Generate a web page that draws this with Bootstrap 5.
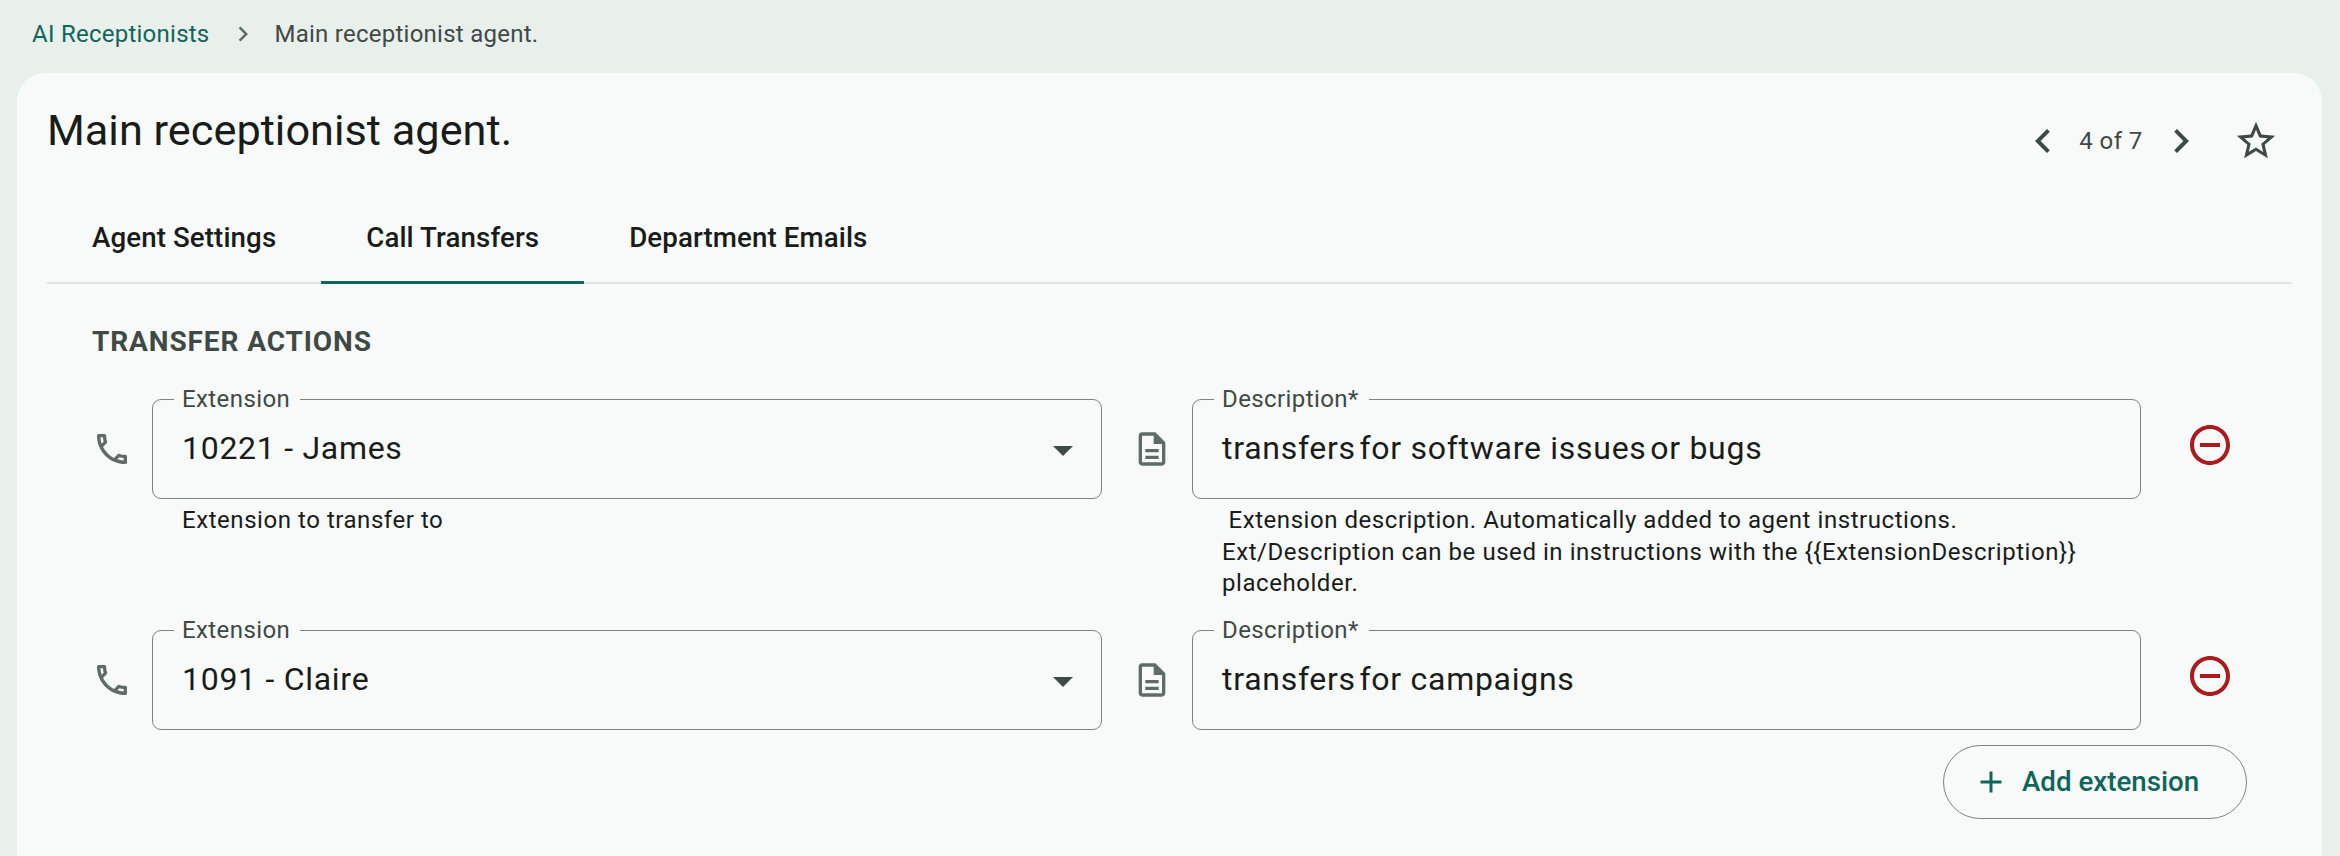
<!DOCTYPE html>
<html lang="en">
<head>
    <meta charset="UTF-8">
    <meta name="viewport" content="width=device-width, initial-scale=1.0">
    <title>Main receptionist agent.</title>
    <link href="https://cdn.jsdelivr.net/npm/bootstrap@5.3.0/dist/css/bootstrap.min.css" rel="stylesheet">
    <style>
        html, body {
            height: 100%;
        }
        body {
            background-color: #e9efeb;
            color: #191c1b;
            font-family: Roboto, sans-serif;
            overflow: hidden;
        }
        svg {
            fill: currentColor;
            display: block;
            flex: none;
        }
        .crumbs {
            height: 73px;
            padding: 0 0 6px 32px;
            font-size: 24px;
            letter-spacing: .25px;
            color: #3f4946;
        }
        .crumbs a {
            color: #0f665a;
            text-decoration: none;
        }
        .crumbs svg {
            margin: 0 17px 0 18px;
            color: #5f6b67;
        }
        .sheet {
            margin: 0 18px 0 17px;
            height: 783px;
            background-color: #f8faf9;
            border-radius: 28px 28px 0 0;
            padding: 0 30px;
        }
        .sheet-head {
            height: 135px;
        }
        .sheet-title {
            font-size: 43.3px;
            font-weight: 400;
            line-height: 52px;
            margin: 32px 0 0;
        }
        .pager {
            margin-top: 44px;
            padding-right: 13px;
            color: #3f4946;
            font-size: 24px;
            letter-spacing: .4px;
        }
        .pager-count {
            width: 90px;
            text-align: center;
            padding-right: 2px;
        }
        .star-btn {
            margin-left: 28px;
        }
        .tab-bar {
            border-bottom: 2px solid #dfe4e1;
            height: 76px;
        }
        .tab-bar .nav-link {
            color: #191c1b;
            font-size: 27.7px;
            font-weight: 500;
            padding: 0 45px;
            height: 76px;
            line-height: 59px;
            margin-bottom: -2px;
            letter-spacing: .1px;
        }
        .tab-bar .nav-link.active {
            border-bottom: 3px solid #0f665a;
        }
        .section-title {
            font-size: 28px;
            font-weight: 700;
            color: #3f4946;
            letter-spacing: .9px;
            margin: 42px 0 0 45px;
            line-height: 32px;
        }
        .ext-row {
            padding-left: 45px;
        }
        .first-row {
            margin-top: 41px;
            min-height: 231px;
        }
        .field-icon {
            width: 40px;
            height: 100px;
            color: #5f6b67;
        }
        .field-wrap {
            width: 950px;
            margin-left: 20px;
        }
        .desc-wrap {
            width: 949px;
        }
        .doc-gap {
            margin-left: 30px;
        }
        .outlined {
            position: relative;
            height: 100px;
            border: 1px solid #7a8580;
            border-radius: 9px;
            padding: 0 29px;
            font-size: 32px;
            letter-spacing: .72px;
            line-height: 96px;
        }
        .outlined-label {
            position: absolute;
            left: 21px;
            top: -14px;
            padding: 0 10px 0 8px;
            background-color: #f8faf9;
            font-size: 24px;
            line-height: 27px;
            color: #3f4946;
            letter-spacing: .4px;
        }
        .caret-icon {
            position: absolute;
            right: 14px;
            top: 26px;
            color: #3f4946;
        }
        .helper {
            font-size: 24px;
            line-height: 31.5px;
            letter-spacing: .55px;
            padding: 6px 29px 0 30px;
        }
        .tight-space {
            word-spacing: -5px;
        }
        .remove-btn {
            color: #ab1a1f;
            background: none;
            border: 0;
            padding: 0;
            margin: 22px 0 0 45px;
            height: 48px;
        }
        .add-ext {
            width: 304px;
            height: 74px;
            margin: 15px 45px 0 0;
            border: 1px solid #7a8580;
            border-radius: 37px;
            color: #0f665a;
            font-size: 27.7px;
            font-weight: 500;
            padding: 0 0 0 29px;
            gap: 13px;
        }
    </style>
</head>
<body>

    <!-- Breadcrumb -->
    <div class="crumbs d-flex align-items-center">
        <a href="#">AI Receptionists</a>
        <svg width="30" height="30" viewBox="0 0 24 24"><path d="M10 6 8.59 7.41 13.17 12l-4.58 4.59L10 18l6-6z"/></svg>
        <span>Main receptionist agent.</span>
    </div>

    <div class="sheet">
        <div class="sheet-head d-flex justify-content-between align-items-start">
            <h1 class="sheet-title">Main receptionist agent.</h1>
            <div class="pager d-flex align-items-center">
                <svg width="48" height="48" viewBox="0 0 24 24"><path d="M15.41 7.41 14 6l-6 6 6 6 1.41-1.41L10.83 12z"/></svg>
                <span class="pager-count">4 of 7</span>
                <svg width="48" height="48" viewBox="0 0 24 24"><path d="M10 6 8.59 7.41 13.17 12l-4.58 4.59L10 18l6-6z"/></svg>
                <svg class="star-btn" width="46" height="46" viewBox="0 0 24 24"><path d="M22 9.24l-7.19-.62L12 2 9.19 8.63 2 9.24l5.46 4.73L5.82 21 12 17.27 18.18 21l-1.63-7.03L22 9.24zM12 15.4l-3.76 2.27 1-4.28-3.32-2.88 4.38-.38L12 6.1l1.71 4.04 4.38.38-3.32 2.88 1 4.28L12 15.4z"/></svg>
            </div>
        </div>

        <ul class="nav tab-bar">
            <li class="nav-item"><a class="nav-link" href="#">Agent Settings</a></li>
            <li class="nav-item"><a class="nav-link active" href="#">Call Transfers</a></li>
            <li class="nav-item"><a class="nav-link" href="#">Department Emails</a></li>
        </ul>

        <h2 class="section-title">TRANSFER ACTIONS</h2>

        <div id="extensions"></div>

        <div class="d-flex justify-content-end">
            <button class="btn add-ext d-flex align-items-center" type="button">
                <svg width="36" height="36" viewBox="0 0 24 24"><path d="M19 13h-6v6h-2v-6H5v-2h6V5h2v6h6v2z"/></svg>
                Add extension
            </button>
        </div>
    </div>

    <script>
        const extensions = [
            {
                name: "10221 - James",
                description: '<span class="tight-space">transfers for</span> software <span class="tight-space">issues or</span> bugs',
                extHelp: "Extension to transfer to",
                descHelp: "&nbsp;Extension description. Automatically added to agent instructions. Ext/Description can be used in instructions with the {{ExtensionDescription}} placeholder."
            },
            { name: "1091 - Claire", description: '<span class="tight-space">transfers for</span> campaigns' }
        ];

        const phoneIcon = '<svg width="40" height="40" viewBox="0 0 24 24"><path d="M6.54 5c.06.89.21 1.76.45 2.59l-1.2 1.2c-.41-1.2-.67-2.47-.76-3.79h1.51m9.86 12.02c.85.24 1.72.39 2.6.45v1.49c-1.32-.09-2.59-.35-3.8-.75l1.2-1.19M7.5 3H4c-.55 0-1 .45-1 1 0 9.39 7.61 17 17 17 .55 0 1-.45 1-1v-3.49c0-.55-.45-1-1-1-1.24 0-2.45-.2-3.57-.57-.1-.04-.21-.05-.31-.05-.26 0-.51.1-.71.29l-2.2 2.2c-2.83-1.45-5.15-3.76-6.59-6.59l2.2-2.2c.28-.28.36-.67.25-1.02C8.7 6.45 8.5 5.25 8.5 4c0-.55-.45-1-1-1z"/></svg>';
        const docIcon = '<svg width="40" height="40" viewBox="0 0 24 24"><path d="M8 16h8v2H8zm0-4h8v2H8zm6-10H6c-1.1 0-2 .9-2 2v16c0 1.1.89 2 1.99 2H18c1.1 0 2-.9 2-2V8l-6-6zm4 18H6V4h7v5h5v11z"/></svg>';
        const caretIcon = '<svg class="caret-icon" width="48" height="48" viewBox="0 0 24 24"><path d="M7 10l5 5 5-5z"/></svg>';
        const removeIcon = '<svg width="48" height="48" viewBox="0 0 24 24"><path d="M7 11v2h10v-2H7zm5-9C6.48 2 2 6.48 2 12s4.48 10 10 10 10-4.48 10-10S17.52 2 12 2zm0 18c-4.41 0-8-3.59-8-8s3.59-8 8-8 8 3.59 8 8-3.59 8-8 8z"/></svg>';

        function renderExtensions() {
            const container = document.getElementById("extensions");
            extensions.forEach((ext, index) => {
                const row = document.createElement("div");
                row.classList.add("ext-row", "d-flex", "align-items-start");
                if (index === 0) row.classList.add("first-row");
                row.innerHTML = `
                    <div class="field-icon d-flex align-items-center justify-content-center">${phoneIcon}</div>
                    <div class="field-wrap">
                        <div class="outlined">
                            <span class="outlined-label">Extension</span>
                            ${ext.name}
                            ${caretIcon}
                        </div>
                        ${ext.extHelp ? `<div class="helper">${ext.extHelp}</div>` : ""}
                    </div>
                    <div class="field-icon doc-gap d-flex align-items-center justify-content-center">${docIcon}</div>
                    <div class="field-wrap desc-wrap">
                        <div class="outlined">
                            <span class="outlined-label">Description*</span>
                            ${ext.description}
                        </div>
                        ${ext.descHelp ? `<div class="helper">${ext.descHelp}</div>` : ""}
                    </div>
                    <button class="remove-btn" type="button">${removeIcon}</button>
                `;
                container.appendChild(row);
            });
        }

        renderExtensions();
    </script>
</body>
</html>
